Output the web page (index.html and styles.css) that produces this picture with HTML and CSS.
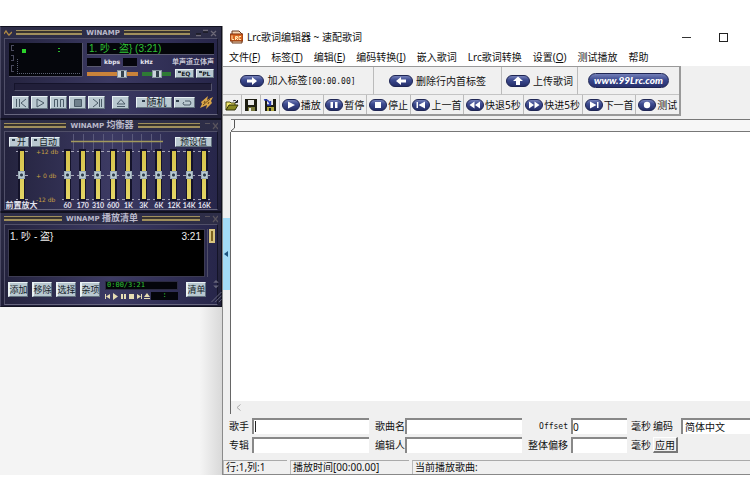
FILE: index.html
```html
<!DOCTYPE html>
<html lang="zh-CN">
<head>
<meta charset="utf-8">
<title>Lrc歌词编辑器 ~ 速配歌词</title>
<link rel="stylesheet" href="styles.css">
</head>
<body>
<svg class="defs" aria-hidden="true">
  <defs>
    <linearGradient id="pillFill" x1="0" y1="0" x2="0" y2="1">
      <stop offset="0" stop-color="#7b86bd"/><stop offset=".4" stop-color="#3d4b90"/><stop offset="1" stop-color="#232c66"/>
    </linearGradient>
  </defs>
  <symbol id="pill" viewBox="0 0 18 12"><rect x=".5" y=".5" width="17" height="11" rx="5.5" fill="url(#pillFill)" stroke="#1f2654"/></symbol>
  <symbol id="widepill" viewBox="0 0 24 12"><rect x=".5" y=".5" width="23" height="11" rx="5.5" fill="url(#pillFill)" stroke="#1f2654"/></symbol>
</svg>
<main class="desk">
  <div class="player">

    <section class="panel">
      <header class="bar">
        <svg class="wave" viewBox="0 0 8 8"><path d="M0 5L2 2L4 5L5 6L8 3" fill="none" stroke="#b08a45" stroke-width="1.3"/></svg>
        <i class="stripe"></i><h2>WINAMP</h2><i class="stripe"></i>
        <svg class="wins" viewBox="0 0 24 8"><path d="M2 6.500H7M9 1.500H14M17 2L22 7M22 2L17 7" fill="none" stroke="#6c6877" stroke-width="1.300"/><path d="M2 5H7M9 3H14" stroke="#111" /></svg>
      </header>
      <div class="frame deck">
        <div class="top">
          <svg class="scope" viewBox="0 0 74 34">
            <rect width="74" height="34" fill="#05060c"/>
            <path d="M73.500 0V33.500H0" fill="none" stroke="#55546c"/>
            <path d="M8.500 16V31M8 30.500H72" fill="none" stroke="#5a6072" stroke-dasharray="1 1"/>
            <path d="M2 2.500H5M2 7.500H5M2 12.500H5M2 17.500H5M2 22.500H5M2 28.500H5M2.500 3V7M4.500 13V17M2.500 23V28" stroke="#4a4a5e"/>
            <rect x="13" y="6" width="4" height="4" fill="#2bd22b"/><path d="M49 5.500H51M49 8.500H51" stroke="#2bb52b"/>
          </svg>
          <div class="info">
            <div class="track">1. 吵 - 盗} (3:21)</div>
            <div class="rates"><i class="cell"></i><b>kbps</b><i class="cell"></i><b>kHz</b><span>单声道立体声</span></div>
            <div class="knobs">
              <input class="h vol" type="range" value="74" aria-label="音量">
              <input class="h bal" type="range" value="50" aria-label="平衡">
              <button class="key tiny"><em></em>EQ</button><button class="key tiny"><em></em>PL</button>
            </div>
          </div>
        </div>
        <div class="seek"></div>
        <div class="keys">
          <button class="key t" aria-label="上一首"><svg viewBox="0 0 12 10"><path d="M1.500 1V9M4.500 9V1M11 1L6 5L11 9"/></svg></button>
          <button class="key t" aria-label="播放"><svg viewBox="0 0 12 10"><path d="M3 1L10 5L3 9Z"/></svg></button>
          <button class="key t" aria-label="暂停"><svg viewBox="0 0 12 10"><path d="M1.500 9V1.500H4.500V9M7.500 9V1.500H10.500V9"/></svg></button>
          <button class="key t" aria-label="停止"><svg viewBox="0 0 12 10"><path class="solid" d="M2.500 1.500H9.500V8.500H2.500Z"/></svg></button>
          <button class="key t" aria-label="下一首"><svg viewBox="0 0 12 10"><path d="M2 1L7 5L2 9M8.500 1V9M10.500 9V1"/></svg></button>
          <button class="key t eject" aria-label="弹出"><svg viewBox="0 0 12 10"><path d="M2 6L6 1.500L10 6ZM2 8.500H10"/></svg></button>
          <button class="key t shuffle"><em></em>随机</button>
          <button class="key t repeat" aria-label="循环"><em></em><svg viewBox="0 0 12 10"><path d="M4 3H9Q11 5 9 7H3Q1 5 3 4"/></svg></button>
          <svg class="bolt" viewBox="0 0 13 13"><path d="M8 0L1 6L2 8L0 12L7 9L6 13L12 7L11 5L13 1L7 4Z" fill="#d9a548"/><path d="M3 9L10 3M5 5L4 7M9 6L8 8" stroke="#6b4a18"/></svg>
        </div>
      </div>
    </section>

    <section class="panel">
      <header class="bar">
        <i class="stripe"></i><h2>WINAMP <span>均衡器</span></h2><i class="stripe"></i>
        <svg class="wins short" viewBox="0 0 14 8"><path d="M1 1.500H6M9 1L14 7M14 1L9 7" fill="none" stroke="#59545d" stroke-width="1.200"/></svg>
      </header>
      <div class="frame eq">
        <div class="eqtop">
          <button class="key small"><em></em>开</button><button class="key small"><em></em>自动</button>
          <svg class="graph" viewBox="0 0 92 16"><path d="M2.500 0V16M12.500 0V16M22.500 0V16M32.500 0V16M41.500 0V16M51.500 0V16M61.500 0V16M70.500 0V16M80.500 0V16M89.500 0V16" stroke="#5a597a"/><path d="M0 7.500H92" stroke="#a29a5c" stroke-width="1.500"/></svg>
          <button class="key small preset">预设值</button>
        </div>
        <div class="sliders">
          <label class="band pre"><input class="v" type="range" value="50"><span>前置放大</span></label>
          <div class="db"><span>+12 db</span><span>+ 0 db</span><span>-12 db</span></div>
          <div class="bands">
            <label class="band"><input class="v" type="range" value="50"><span>60</span></label>
            <label class="band"><input class="v" type="range" value="50"><span>170</span></label>
            <label class="band"><input class="v" type="range" value="50"><span>310</span></label>
            <label class="band"><input class="v" type="range" value="50"><span>600</span></label>
            <label class="band"><input class="v" type="range" value="50"><span>1K</span></label>
            <label class="band"><input class="v" type="range" value="50"><span>3K</span></label>
            <label class="band"><input class="v" type="range" value="50"><span>6K</span></label>
            <label class="band"><input class="v" type="range" value="50"><span>12K</span></label>
            <label class="band"><input class="v" type="range" value="50"><span>14K</span></label>
            <label class="band"><input class="v" type="range" value="50"><span>16K</span></label>
          </div>
        </div>
      </div>
    </section>

    <section class="panel last">
      <header class="bar">
        <i class="stripe"></i><h2>WINAMP <span>播放清单</span></h2><i class="stripe"></i>
        <svg class="wins short" viewBox="0 0 14 8"><path d="M1 1.500H6M9 1L14 7M14 1L9 7" fill="none" stroke="#59545d" stroke-width="1.200"/></svg>
      </header>
      <div class="frame list">
        <div class="rows"><div class="song"><span>1. 吵 - 盗}</span><span>3:21</span></div><div class="rail"><i></i></div></div>
        <div class="tools">
          <button class="key block">添加</button><button class="key block">移除</button><button class="key block">选择</button><button class="key block">杂项</button>
          <div class="mini">
            <div class="clock">0:00/3:21</div>
            <div class="minirow">
              <svg viewBox="0 0 46 7"><path d="M0 1H1V6H0ZM5 1V6L1 3.500ZM8 0L13 3.500L8 7ZM16 1H18V6H16ZM19 1H21V6H19ZM24 1H29V6H24ZM32 1L36 3.500L32 6ZM36 1H37V6H36ZM39 4L42 0L45 4ZM39 5H45V6H39Z" fill="#e6dcb4"/></svg>
              <i class="colon">:</i>
            </div>
          </div>
          <button class="key block">清单</button>
          <svg class="grip" viewBox="0 0 12 27"><path d="M3 4L6 1L9 4ZM3 7L6 10L9 7Z" fill="#65647a"/><path d="M1 25L12 14M5 25L12 18M9 25L12 22" stroke="#6b6a80"/></svg>
        </div>
      </div>
    </section>
  </div>

  <section class="editor">
    <header class="title">
      <svg class="app" viewBox="0 0 13 14"><path d="M2 1H9L12 4V13H2Z" fill="#f7d9b5" stroke="#6b3a20"/><rect x="0" y="4" width="13" height="7" fill="#d9641e" stroke="#7c2e0a"/><path d="M2 5.500V9.500H4M5.500 10V6.500H7.500V8H6L8 10M11 6.500H9V9.500H11" fill="none" stroke="#ffe7b0"/></svg>
      <h1>Lrc歌词编辑器 ~ 速配歌词</h1>
      <button class="win" aria-label="最小化"><svg viewBox="0 0 9 9"><path d="M0 4.500H9" stroke="#333"/></svg></button>
      <button class="win" aria-label="最大化"><svg viewBox="0 0 9 9"><rect x=".5" y=".5" width="8" height="8" fill="none" stroke="#222"/></svg></button>
    </header>
    <nav class="menu">
      <a href="#">文件(<u>F</u>)</a><a href="#">标签(<u>T</u>)</a><a href="#">编辑(<u>E</u>)</a><a href="#">编码转换(<u>I</u>)</a><a href="#">嵌入歌词</a><a href="#">Lrc歌词转换</a><a href="#">设置(<u>O</u>)</a><a href="#">测试播放</a><a href="#">帮助</a>
    </nav>
    <div class="work">
      <div class="bars">
        <div class="big">
          <button><svg viewBox="0 0 24 12"><use href="#widepill"/><path d="M7 4.500H12V2L17 6L12 10V7.500H7Z" fill="#fff"/></svg><span>加入标签<tt>[00:00.00]</tt></span></button>
          <button><svg viewBox="0 0 24 12"><use href="#widepill"/><path d="M17 4.500H12V2L7 6L12 10V7.500H17Z" fill="#fff"/></svg><span>删除行内首标签</span></button>
          <button><svg viewBox="0 0 24 12"><use href="#widepill"/><path d="M12 1.500L17 6H14V10H10V6H7Z" fill="#fff"/></svg><span>上传歌词</span></button>
          <a class="site" href="#"><span>www.99Lrc.com</span></a>
        </div>
        <div class="small-row">
          <button class="file" aria-label="打开"><svg viewBox="0 0 14 12"><path d="M1 11V3H5L6 4H10V6" fill="#f0e66a" stroke="#4a4a10"/><path d="M1 11L4 6H13L10 11Z" fill="#8a8a20" stroke="#33330a"/><path d="M8 2Q10 0 12 3M12.500 1V3.500H10" fill="none" stroke="#222"/></svg></button>
          <button class="file" aria-label="保存"><svg viewBox="0 0 14 12"><path d="M1 0H13V12H1Z" fill="#1d1d12"/><path d="M4 1H10V6H4Z" fill="#e8e8e8"/><path d="M4 8H11V12H4Z" fill="#77773a"/><path d="M5 9H7V12H5Z" fill="#eee"/></svg></button>
          <button class="file" aria-label="另存为"><svg viewBox="0 0 14 12"><path d="M2 0H13V12H2Z" fill="#1d1d12"/><path d="M4 0H10V6H4Z" fill="#e8e8e8"/><path d="M4 8H11V12H4Z" fill="#b0a83c"/><path d="M6 9H8V12H6Z" fill="#222"/><path d="M1 1Q5 0 7 5M7.500 2V6H4" fill="none" stroke="#2638b0" stroke-width="1.400"/></svg></button>
          <button><svg viewBox="0 0 18 12"><use href="#pill"/><path d="M6 2.500L13 6L6 9.500Z" fill="#fff"/></svg>播放</button>
          <button><svg viewBox="0 0 18 12"><use href="#pill"/><path d="M5.500 3H8V9H5.500ZM10 3H12.500V9H10Z" fill="#fff"/></svg>暂停</button>
          <button><svg viewBox="0 0 18 12"><use href="#pill"/><path d="M6 3H12V9H6Z" fill="#fff"/></svg>停止</button>
          <button><svg viewBox="0 0 18 12"><use href="#pill"/><path d="M4.500 3H6V9H4.500ZM13 2.500V9.500L6.500 6Z" fill="#fff"/></svg>上一首</button>
          <button><svg viewBox="0 0 18 12"><use href="#pill"/><path d="M8.500 2.500V9.500L3.500 6ZM14 2.500V9.500L9 6Z" fill="#fff"/></svg>快退5秒</button>
          <button><svg viewBox="0 0 18 12"><use href="#pill"/><path d="M4 2.500L9 6L4 9.500ZM9.500 2.500L14.500 6L9.500 9.500Z" fill="#fff"/></svg>快进5秒</button>
          <button><svg viewBox="0 0 18 12"><use href="#pill"/><path d="M5 2.500L11.500 6L5 9.500ZM12 3H13.500V9H12Z" fill="#fff"/></svg>下一首</button>
          <button><svg viewBox="0 0 18 12"><use href="#pill"/><circle cx="9" cy="6" r="3.200" fill="#fff"/></svg>测试</button>
        </div>
      </div>
      <div class="ruler"><svg viewBox="0 0 4 12"><path d="M3.500 0V8L0 11" fill="none" stroke="#555"/></svg></div>
      <div class="sheet"><textarea aria-label="歌词"></textarea><div class="hscroll"><svg viewBox="0 0 5 7"><path d="M4.500 .5L1 3.500L4.500 6.500" fill="none" stroke="#aaa"/></svg></div></div>
      <form class="fields">
        <label for="singer">歌手</label><div class="box caret"><input id="singer"></div>
        <label for="song" class="mid">歌曲名</label><div class="box"><input id="song"></div>
        <label for="off" class="end"><tt>Offset</tt></label><div class="box"><input id="off" value="0"></div>
        <span class="unit">毫秒</span><label for="enc">编码</label>
        <div class="box"><select id="enc"><option>简体中文</option></select></div>
        <label for="album">专辑</label><div class="box"><input id="album"></div>
        <label for="ed" class="mid">编辑人</label><div class="box"><input id="ed"></div>
        <label for="shift" class="end">整体偏移</label><div class="box"><input id="shift"></div>
        <span class="unit">毫秒</span><button type="button">应用</button>
      </form>
    </div>
    <footer class="status"><span>行:1,列:1</span><span>播放时间[00:00.00]</span><span>当前播放歌曲:</span></footer>
    <button class="handle" aria-label="收起"><svg viewBox="0 0 4 6"><path d="M4 0V6L0 3Z" fill="#1d5580"/></svg></button>
  </section>
</main>
</body>
</html>
```
FILE: styles.css
```css
* { box-sizing: border-box; }
body {
  margin: 0;
  background: #fff;
  color: #111;
  font: 10px/12px "Noto Sans", "Noto Sans CJK SC", sans-serif;
}
button, input, select, textarea { font: inherit; color: inherit; margin: 0; padding: 0; border: 0; border-radius: 0; }
button { background: none; white-space: nowrap; }
a { color: inherit; text-decoration: none; }
h1, h2 { margin: 0; font: inherit; }
i, em { display: block; font-style: normal; }
svg { display: block; flex: none; }
tt { font: 8px/12px "DejaVu Sans Mono", monospace; }
.defs { position: absolute; width: 0; height: 0; }

.desk { display: grid; grid-template-columns: 222px minmax(0, 1fr); padding: 26px 0; }

/* player */
.player { background: linear-gradient(90deg, #f4f4f4 200px, #d9d9d9); color: #e4e4ee; }
.panel {
  height: 93px;
  padding: 0 3px 3px;
  display: flex;
  flex-direction: column;
  background: linear-gradient(180deg, #2e2e48, #1f1e38);
  border: 1px solid #11111f;
  border-left: 1px solid #4a4964;
}
.panel.last { height: 95px; }
.bar { display: flex; align-items: center; gap: 4px; height: 11px; }
.bar h2 { font: 900 7px/10px "DejaVu Sans", "Noto Sans CJK SC", sans-serif; color: #bab9ca; }
.bar h2 span { font-size: 9px; font-weight: 700; }
.stripe { flex: 1; height: 5px; border: solid #a08f5c; border-width: 1px 0 2px; background: #38332f; }
.wave { width: 8px; height: 8px; }
.wins { width: 24px; height: 8px; }
.wins.short { width: 14px; }
.frame {
  flex: 1;
  background: linear-gradient(90deg, #24233e, #3c3a63 50%, #27264a);
  border: 1px solid #504f68;
  border-right-color: #141428;
  border-bottom-color: #67667e;
}
.key {
  display: flex;
  align-items: center;
  justify-content: center;
  background: #b9c8d0;
  border: 1px solid;
  border-color: #e8f1f4 #64727f #64727f #e8f1f4;
  color: #141c28;
}
.key em { flex: none; width: 3px; height: 2px; margin: 0 2px 3px 0; background: #2d3c4a; }

.deck { padding: 4px 3px 0 4px; }
.top { display: flex; gap: 4px; }
.scope { width: 74px; height: 34px; }
.info { flex: 1; min-width: 0; }
.track {
  height: 12px;
  padding-left: 2px;
  background: #04050a;
  border-bottom: 1px solid #5a5970;
  color: #2fc334;
  font: 10px/11px "Liberation Sans", "Noto Sans CJK SC", sans-serif;
}
.rates { display: flex; align-items: center; gap: 3px; height: 14px; }
.rates b { font: 700 6px/8px "DejaVu Sans", sans-serif; }
.rates span { margin-left: auto; font-size: 7px; font-weight: 700; color: #c6c5d4; white-space: nowrap; }
.cell { width: 14px; height: 9px; background: #05050c; border-bottom: 1px solid #5a5970; }
.knobs { display: flex; align-items: center; gap: 4px; height: 9px; }
.h { appearance: none; height: 8px; background: linear-gradient(#0000 2px, #c9823a 2px 6px, #0000 6px); }
.h::-webkit-slider-thumb { appearance: none; width: 10px; height: 8px; background: linear-gradient(90deg, #cbd5dc 3px, #33414d 3px 6px, #cbd5dc 6px); border: 1px solid #8795a0; }
.vol { width: 51px; }
.bal { width: 29px; background: linear-gradient(#0000 2px, #2e7a35 2px 6px, #0000 6px); }
.tiny { flex: 1; height: 9px; font: 700 6px/7px "DejaVu Sans", sans-serif; }
.tiny em { margin-right: 0; }
.tiny + .tiny { margin-left: -2px; }
.seek { height: 8px; margin: 5px 2px 0 5px; background: #211f3a; border: 1px solid #15142b; border-right-color: #55546c; border-bottom-color: #55546c; }
.keys { display: flex; align-items: center; gap: 2px; margin: 5px 1px 0 3px; }
.t { width: 17px; height: 13px; }
.t svg { width: 12px; height: 10px; fill: none; stroke: #4b5b68; stroke-width: 1; }
.t .solid { fill: #6f808c; }
.eject { margin: 0 5px; }
.shuffle { width: 36px; height: 11px; font-size: 10px; line-height: 9px; }
.repeat { width: 21px; height: 11px; }
.bolt { width: 13px; height: 13px; margin-left: auto; }

.eq { padding: 2px 5px 0 4px; }
.eqtop { display: flex; align-items: center; gap: 2px; height: 15px; }
.small { height: 10px; padding: 0 2px; font-size: 9px; line-height: 8px; }
.graph { width: 92px; height: 16px; margin-left: 9px; }
.preset { margin-left: auto; padding: 0 4px; }
.sliders { display: flex; }
.band { display: flex; flex-direction: column; align-items: center; width: 100%; min-width: 0; }
.band span { font: 700 7px/8px Lato, "Noto Sans CJK SC", sans-serif; white-space: nowrap; }
.v {
  appearance: none;
  writing-mode: vertical-lr;
  direction: rtl;
  width: 100%;
  height: 52px;
  background:
    linear-gradient(#d6c34c, #e3d565) center / 4px 48px no-repeat,
    linear-gradient(#14132a, #14132a) center / 7px 52px no-repeat,
    linear-gradient(#a5a4b6 0 0) center 2px / 12px 1px no-repeat,
    linear-gradient(#a5a4b6 0 0) center / 12px 1px no-repeat,
    linear-gradient(#a5a4b6 0 0) center 50px / 12px 1px no-repeat;
}
.v::-webkit-slider-thumb { appearance: none; width: 7px; height: 8px; background: radial-gradient(circle, #2d3c48 1px, #b8c9d2 2px); border: 1px solid #9aabb5; }
.pre { width: 25px; }
.pre span { font-size: 8px; width: 34px; margin-left: 2px; }
.db { display: flex; flex-direction: column; justify-content: space-between; height: 54px; width: 26px; padding-left: 2px; color: #c9a044; font: 6px/6px "DejaVu Sans", sans-serif; white-space: nowrap; }
.bands { flex: 1; display: grid; grid-template-columns: repeat(10, minmax(0, 1fr)); }

.list { padding: 4px 1px 0 3px; }
.rows { display: flex; gap: 2px; }
.song { flex: 1; display: flex; justify-content: space-between; height: 48px; padding: 1px 3px 1px 1px; background: #000; border: 1px solid #3c3b52; color: #eee; font: 10px/12px "Liberation Sans", "Noto Sans CJK SC", sans-serif; }
.rail { width: 9px; border-left: 1px solid #504f68; }
.rail i { width: 6px; height: 14px; margin-left: 1px; background: #7c6220; border: 2px solid #d8c47e; }
.tools { display: flex; gap: 4px; padding-top: 2px; }
.block { width: 20px; height: 15px; margin-top: 3px; border-left-width: 2px; font-size: 9px; line-height: 10px; }
.mini { flex: 1; margin: 2px 4px 0 1px; }
.clock { height: 9px; padding-left: 1px; background: #04050a; border: 1px solid #2c2b42; color: #2fc334; font: 7px/7px "DejaVu Sans Mono", monospace; }
.minirow { display: flex; align-items: center; justify-content: space-between; margin-top: 2px; }
.minirow svg { width: 46px; height: 7px; }
.colon { width: 27px; height: 8px; background: #04050a; color: #2fc334; text-align: center; font: 7px/7px "DejaVu Sans Mono", monospace; }
.grip { width: 12px; height: 25px; }

/* editor */
.editor { position: relative; display: flex; flex-direction: column; border-left: 1px solid #8b8b8b; background: #fff; }
.title { display: flex; align-items: center; height: 22px; padding-left: 7px; }
.app { width: 13px; height: 14px; }
.title h1 { flex: 1; margin-left: 4px; }
.win { width: 9px; height: 9px; margin-right: 28px; }
.win + .win { margin-right: 22px; }
.win svg { width: 9px; height: 9px; }
.menu { display: flex; gap: 11px; height: 18px; padding: 3px 6px; white-space: nowrap; }
.menu u { text-underline-offset: 1px; }
.work { background: #f0f0f0; padding: 0 0 7px; }
.bars { width: max-content; border: solid #999; border-width: 1px 2px 2px 0; }
.big { display: grid; grid-template-columns: 151px 128px 76px 101px; height: 28px; }
.big > * { display: flex; align-items: center; justify-content: center; gap: 3px; border-right: 1px solid #bbb; border-bottom: 1px solid #c4c4c4; }
.big > :last-child { border-right: 0; }
.big svg { width: 24px; height: 12px; }
.site span { height: 15px; padding: 0 5px; border-radius: 8px; background: linear-gradient(#7480b8, #37458c 50%, #27306c); border: 1px solid #1f2654; color: #fff; font: italic 900 10px/12px Lato, sans-serif; }
.small-row { display: flex; height: 19px; }
.small-row button { flex: auto; display: flex; align-items: center; justify-content: center; gap: 1px; padding: 0 1px; border-right: 1px solid #bbb; }
.small-row button:last-child { border-right: 0; }
.small-row svg { width: 18px; height: 12px; }
.small-row .file { flex: 0 0 19px; }
.small-row .file svg { width: 14px; height: 12px; }
.ruler { height: 13px; margin: 3px 0 0 8px; border: solid #777; border-width: 1px 0; background: #f7f7f7; }
.ruler svg { width: 4px; height: 12px; }
.sheet { margin-left: 7px; border-left: 1px solid #666; }
.sheet textarea { display: block; width: 100%; height: 269px; background: #fff; resize: none; outline: 0; }
.hscroll { height: 13px; padding: 3px 5px; }
.hscroll svg { width: 5px; height: 7px; }
.fields {
  display: grid;
  grid-template-columns: 23px 117px 36px 117px 49px 56px 26px 28px minmax(0, 1fr);
  row-gap: 3px;
  padding: 4px 0 0 6px;
  align-items: center;
  white-space: nowrap;
}
.box { height: 16px; background: #fff; border-top: 2px solid #888; border-left: 2px solid #888; }
.box input, .box select { display: block; width: 100%; height: 14px; background: none; outline: 0; appearance: none; line-height: 12px; }
.box select { padding-left: 2px; }
.caret { background: linear-gradient(#222, #222) 1px 1px / 1px 11px no-repeat #fff; }
.mid { padding-left: 6px; }
.end { text-align: right; padding-right: 3px; }
.unit { padding-left: 4px; }
.fields button { width: 25px; height: 16px; border: 1px solid #fff; border-right: 2px solid #777; border-bottom: 2px solid #777; line-height: 12px; }
.status { display: grid; grid-template-columns: 64px 119px minmax(0, 1fr); gap: 3px; background: #f0f0f0; border-bottom: 1px solid #888; }
.status span { height: 14px; padding-left: 2px; border-top: 1px solid #aaa; border-left: 1px solid #bbb; line-height: 13px; white-space: nowrap; }
.handle { position: absolute; left: 0; top: 192px; width: 7px; height: 72px; background: #a3dcf7; }
.handle svg { width: 4px; height: 6px; margin-left: 1px; }
```
